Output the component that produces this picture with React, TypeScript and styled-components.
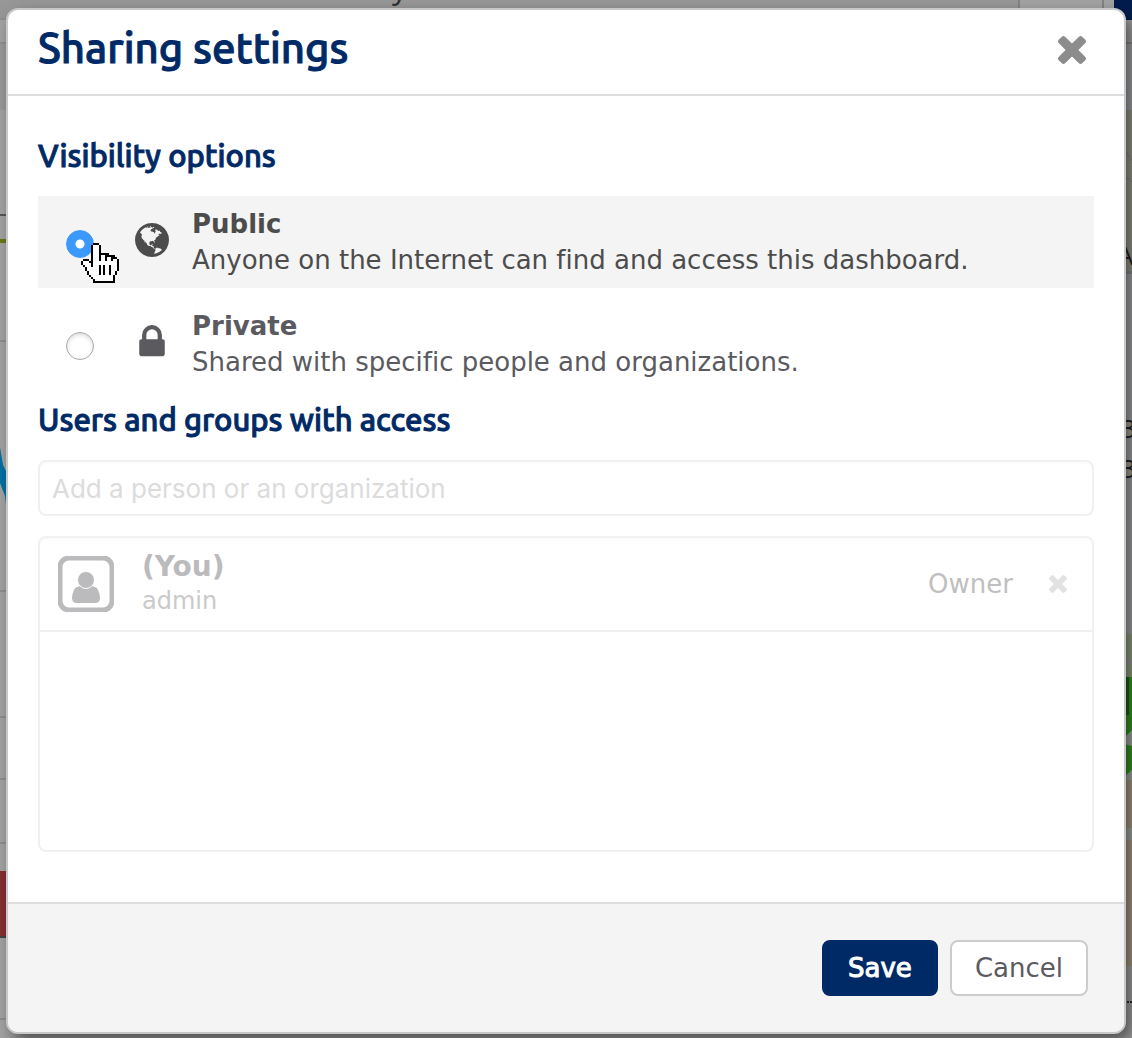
import React, { useState } from "react";
import styled, { createGlobalStyle, css } from "styled-components";

const navy = "#002a66";
const bodyFont = `Verdana, "DejaVu Sans", sans-serif`;
const headingFont = `Ubuntu, Lato, sans-serif`;

const GlobalStyle = createGlobalStyle`
  *, *::before, *::after { box-sizing: border-box; }
  body {
    margin: 0;
    background: #a3a3a3;
    font-family: ${bodyFont};
    font-size: 26px;
    line-height: 36px;
    color: #5a5a5f;
    font-variant-ligatures: none;
  }
  h1, h2, p { margin: 0; }
  button, input { font: inherit; color: inherit; }
`;

const Page = styled.div`
  position: relative;
  min-height: 100vh;
  padding: 8px 6px 4px;
  overflow: hidden;
`;

const Backdrop = styled.svg<{ $side: "left" | "right" }>`
  position: absolute;
  top: 0;
  ${p => (p.$side === "left" ? "left: 0;" : "right: 0;")}
  width: ${p => (p.$side === "left" ? "420px" : "120px")};
  height: 1038px;
`;

const TopBand = styled.div`
  position: absolute;
  top: 0;
  left: 0;
  right: 0;
  height: 20px;
  background: #979797;
`;

const Dialog = styled.section`
  position: relative;
  border: 2px solid #c8c8c8;
  border-radius: 12px;
  background: #fff;
  box-shadow: 6px 8px 16px rgba(0, 0, 0, 0.5);
  overflow: hidden;
`;

const Header = styled.header`
  display: flex;
  justify-content: space-between;
  align-items: center;
  height: 86px;
  padding: 0 38px 4px 30px;
  border-bottom: 2px solid #ddd;
`;

const Title = styled.h1`
  padding-bottom: 4px;
  font: 500 42px/52px ${headingFont};
  color: ${navy};
  -webkit-text-stroke: 1px ${navy};
`;

const IconButton = styled.button<{ $size: number; $color: string }>`
  display: flex;
  padding: 0;
  border: 0;
  background: none;
  color: ${p => p.$color};
  cursor: pointer;
  svg { width: ${p => p.$size}px; height: ${p => p.$size}px; }
`;

const Body = styled.form`
  display: block;
  padding: 40px 30px 50px;
`;

const Group = styled.fieldset`
  margin: 0;
  padding: 0;
  border: 0;
  min-width: 0;
`;

const headingStyle = css`
  display: block;
  margin: 0 0 20px;
  padding: 0;
  font: 500 31px/40px ${headingFont};
  color: ${navy};
  -webkit-text-stroke: 1px ${navy};
`;
const Legend = styled.legend`${headingStyle}`;
const SectionTitle = styled.h2`${headingStyle}`;

const Option = styled.label<{ $active: boolean }>`
  display: grid;
  grid-template-columns: 28px 80px 1fr;
  column-gap: 18px;
  align-items: start;
  margin-bottom: 10px;
  padding: 10px 28px;
  background: ${p => (p.$active ? "#f4f4f4" : "#fff")};
  color: ${p => (p.$active ? "#4c4c4c" : "#5a5a5f")};
  cursor: pointer;
`;

const RadioCell = styled.span`
  position: relative;
  display: flex;
  padding-top: 24px;
`;

const Radio = styled.input`
  appearance: none;
  width: 28px;
  height: 28px;
  margin: 0;
  border: 1px solid #a8a8a8;
  border-radius: 50%;
  background: #fff;
  box-shadow: inset 0 2px 4px rgba(0, 0, 0, 0.14);
  &:checked {
    border-color: #3b99fc;
    background: radial-gradient(circle, #fff 0 4px, #3b99fc 5px);
    box-shadow: none;
  }
`;

const Pointer = styled.svg`
  position: absolute;
  top: 37px;
  left: 15px;
  width: 38px;
  height: 40px;
  pointer-events: none;
`;

const OptionIcon = styled.span`
  display: flex;
  justify-content: center;
  align-items: center;
  height: 34px;
  margin-top: 17px;
`;

const OptionText = styled.span`
  display: flex;
  flex-direction: column;
  margin-left: -18px;
`;

const PersonInput = styled.input`
  display: block;
  width: 100%;
  height: 56px;
  margin-bottom: 20px;
  padding: 0 12px;
  border: 2px solid #f0f0f0;
  border-radius: 8px;
  background: #fff;
  box-shadow: inset 0 2px 2px rgba(0, 0, 0, 0.02);
  font: 400 26px/36px Inter, sans-serif;
  &::placeholder { color: #dcdcdc; opacity: 1; }
`;

const Members = styled.ul`
  min-height: 316px;
  margin: 0;
  padding: 0;
  list-style: none;
  border: 2px solid #f0f0f0;
  border-radius: 8px;
  box-shadow: inset 0 2px 2px rgba(0, 0, 0, 0.02);
`;

const Member = styled.li`
  display: flex;
  align-items: center;
  height: 94px;
  padding: 0 25px 0 18px;
  border-bottom: 2px solid #f0f0f0;
`;

const MemberText = styled.div`
  display: flex;
  flex: 1;
  flex-direction: column;
  margin-left: 28px;
  line-height: 34px;
`;

const MemberName = styled.strong`
  font-size: 28px;
  color: #bbbbbd;
`;
const MemberLogin = styled.span`
  font-size: 24px;
  color: #cacaca;
`;
const Role = styled.span`
  margin-right: 36px;
  color: #bfbfbf;
`;

const Footer = styled.footer`
  display: flex;
  justify-content: flex-end;
  gap: 12px;
  padding: 36px;
  border-top: 2px solid #ddd;
  background: #f4f4f4;
`;

const Button = styled.button<{ $primary?: boolean }>`
  min-width: 116px;
  height: 56px;
  padding: 0 23px;
  border: 2px solid ${p => (p.$primary ? navy : "#ccc")};
  border-radius: 8px;
  background: ${p => (p.$primary ? navy : "#fff")};
  color: ${p => (p.$primary ? "#fff" : "#5a5a5f")};
  -webkit-text-stroke: ${p => (p.$primary ? "1px #fff" : "0")};
  cursor: pointer;
`;

const TimesIcon = () => (
  <svg viewBox="110 366 1188 1188" fill="currentColor" aria-hidden="true">
    <path d="M1298 1322q0 40-28 68l-136 136q-28 28-68 28t-68-28l-294-294-294 294q-28 28-68 28t-68-28l-136-136q-28-28-28-68t28-68l294-294-294-294q-28-28-28-68t28-68l136-136q28-28 68-28t68 28l294 294 294-294q28-28 68-28t68 28l136 136q28 28 28 68t-28 68l-294 294 294 294q28 28 28 68z" />
  </svg>
);

const LockIcon = () => (
  <svg viewBox="0 128 1152 1536" width="26" height="34" fill="currentColor" aria-hidden="true">
    <path d="M320 768h512v-192q0-106-75-181t-181-75-181 75-75 181v192zm832 96v576q0 40-28 68t-68 28h-960q-40 0-68-28t-28-68v-576q0-40 28-68t68-28h32v-192q0-184 132-316t316-132 316 132 132 316v192h32q40 0 68 28t28 68z" />
  </svg>
);

const GlobeIcon = () => (
  <svg viewBox="0 128 1536 1536" width="34" height="34" fill="currentColor" aria-hidden="true">
    <path d="M768 128q209 0 385.5 103t279.5 279.5 103 385.5-103 385.5-279.5 279.5-385.5 103-385.5-103-279.5-279.5-103-385.5 103-385.5 279.5-279.5 385.5-103zm274 521q-2 1-9.5 9.5t-13.5 9.5q2 0 4.5-5t5-11 3.5-7q6-7 22-15 14-6 52-12 34-8 51 11-2-2 9.5-13t14.5-12q3-2 15-4.5t15-7.5l2-22q-12 1-17.5-7t-6.5-21q0 2-6 8 0-7-4.5-8t-11.5 1-9 1q-10-3-15-7.5t-8-16.5-4-15q-2-5-9.5-11t-9.5-10q-1-2-2.5-5.5t-3-6.5-4-5.5-5.5-2.5-7 5-7.5 10-4.5 5q-3-2-6-1.5t-4.5 1-4.5 3-5 3.5q-3 2-8.5 3t-8.5 2q15-5-1-11-10-4-16-3 9-4 7.5-12t-8.5-14h5q-1-4-8.5-8.5t-17.5-8.5-13-6q-8-5-34-9.5t-33-.5q-5 6-4.5 10.5t4 14 3.5 12.5q1 6-5.5 13t-6.5 12q0 7 14 15.5t10 21.5q-3 8-16 16t-16 12q-5 8-1.5 18.5t10.5 16.5q2 2 1.5 4t-3.5 4.5-5.5 4-6.5 3.5l-3 2q-11 5-20.5-6t-13.5-26q-7-25-16-30-23-8-29 1-5-13-41-26-25-9-58-4 6-1 0-15-7-15-19-12 3-6 4-17.5t1-13.5q3-13 12-23 1-1 7-8.5t9.5-13.5.5-6q35 4 50-11 5-5 11.5-17t10.5-17q9-6 14-5.5t14.5 5.5 14.5 5q14 1 15.5-11t-7.5-20q12 1 3-17-4-7-8-9-12-4-27 5-8 4 2 8-1-1-9.5 10.5t-16.5 17.5-16-5q-1-1-5.5-13.5t-9.5-13.5q-8 0-16 15 3-8-11-15t-24-8q19-12-8-27-7-4-20.5-5t-19.5 4q-5 7-5.5 11.5t5 8 10.5 5.5 11.5 4 8.5 3q14 10 8 14-2 1-8.5 3.5t-11.5 4.5-6 4q-3 4 0 14t-2 14q-5-5-9-17.5t-7-16.5q7 9-25 6l-10-1q-4 0-16 2t-20.5 1-13.5-8q-4-8 0-20 1-4 4-2-4-3-11-9.5t-10-8.5q-46 15-94 41 6 1 12-1 5-2 13-6.5t10-5.5q34-14 42-7l5-5q14 16 20 25-7-4-30-1-20 6-22 12 7 12 5 18-4-3-11.5-10t-14.5-11-15-5q-16 0-22 1-146 80-235 222 7 7 12 8 4 1 5 9t2.5 11 11.5-3q9 8 3 19 1-1 44 27 19 17 21 21 3 11-10 18-1-2-9-9t-9-4q-3 5 .5 18.5t10.5 12.5q-7 0-9.5 16t-2.5 35.5-1 23.5l2 1q-3 12 5.5 34.5t21.5 19.5q-13 3 20 43 6 8 8 9 3 2 12 7.5t15 10 10 10.5q4 5 10 22.5t14 23.5q-2 6 9.5 20t10.5 23q-1 0-2.5 1t-2.5 1q3 7 15.5 14t15.5 13q1 3 2 10t3 11 8 2q2-20-24-62-15-25-17-29-3-5-5.5-15.5t-4.5-14.5q2 0 6 1.5t8.5 3.5 7.5 4 2 3q-3 7 2 17.5t12 18.5 17 19 12 13q6 6 14 19.5t0 13.5q9 0 20 10t17 20q5 8 8 26t5 24q2 7 8.5 13.5t12.5 9.5l16 8 13 7q5 2 18.5 10.5t21.5 11.5q10 4 16 4t14.5-2.5 13.5-3.5q15-2 29 15t21 21q36 19 55 11-2 1 .5 7.5t8 15.5 9 14.5 5.5 8.5q5 6 18 15t18 15q6-4 7-9-3 8 7 20t18 10q14-3 14-32-31 15-49-18 0-1-2.5-5.5t-4-8.5-2.5-8.5 0-7.5 5-3q9 0 10-3.5t-2-12.5-4-13q-1-8-11-20t-12-15q-5 9-16 8t-16-9q0 1-1.5 5.5t-1.5 6.5q-13 0-15-1 1-3 2.5-17.5t3.5-22.5q1-4 5.5-12t7.5-14.5 4-12.5-4.5-9.5-17.5-2.5q-19 1-26 20-1 3-3 10.5t-5 11.5-9 7q-7 3-24 2t-24-5q-13-8-22.5-29t-9.5-37q0-10 2.5-26.5t3-25-5.5-24.5q3-2 9-9.5t10-10.5q2-1 4.5-1.5t4.5 0 4-1.5 3-6q-1-1-4-3-3-3-4-3 7 3 28.5-1.5t27.5 1.5q15 11 22-2 0-1-2.5-9.5t-.5-13.5q5 27 29 9 3 3 15.5 5t17.5 5q3 2 7 5.5t5.5 4.5 5-.5 8.5-6.5q10 14 12 24 11 40 19 44 7 3 11 2t4.5-9.5 0-14-1.5-12.5l-1-8v-18l-1-8q-15-3-18.5-12t1.5-18.5 15-18.5q1-1 8-3.5t15.5-6.5 12.5-8q21-19 15-35 7 0 11-9-1 0-5-3t-7.5-5-4.5-2q9-5 2-16 5-3 7.5-11t7.5-10q9 12 21 2 7-8 1-16 5-7 20.5-10.5t18.5-9.5q7 2 8-2t1-12 3-12q4-5 15-9t13-5l17-11q3-4 0-4 18 2 31-11 10-11-6-20 3-6-3-9.5t-15-5.5q3-1 11.5-.5t10.5-1.5q15-10-7-16-17-5-43 12zm-163 877q206-36 351-189-3-3-12.5-4.5t-12.5-3.5q-18-7-24-8 1-7-2.5-13t-8-9-12.5-8-11-7q-2-2-7-6t-7-5.5-7.5-4.5-8.5-2-10 1l-3 1q-3 1-5.5 2.5t-5.5 3-4 3 0 2.5q-21-17-36-22-5-1-11-5.5t-10.5-7-10-1.5-11.5 7q-5 5-6 15t-2 13q-7-5 0-17.5t2-18.5q-3-6-10.5-4.5t-12 4.5-11.5 8.5-9 6.5-8.5 5.5-8.5 7.5q-3 4-6 12t-5 11q-2-4-11.5-6.5t-9.5-5.5q2 10 4 35t5 38q7 31-12 48-27 25-29 40-4 22 12 26 0 7-8 20.5t-7 21.5q0 6 2 16z" />
  </svg>
);

const AvatarIcon = () => (
  <svg viewBox="0 0 56 56" width="56" height="56" aria-hidden="true">
    <rect x="2" y="2" width="52" height="52" rx="9" fill="none" stroke="#bbbbbd" strokeWidth="5" />
    <path
      fill="#bbbbbd"
      d="M20 31q2-2 4-1q4 3 8 0q2-1 4 1q3 0 4 3q2 4 2 8q0 5-5 5H19q-5 0-5-5q0-4 2-8q1-3 4-3z"
    />
    <circle cx="28" cy="24" r="8.5" fill="#bbbbbd" stroke="#fff" strokeWidth="1" />
  </svg>
);

const handRows = [
  "......XXX..........",
  ".....XoooX.........",
  ".....XoooX.........",
  ".....XoooX.........",
  ".....XoooX.........",
  ".....XoooXXXXX.....",
  ".....XoooXooXXXXX..",
  ".....XoooXooXooXXX.",
  ".XXX.XoooXooXooXooX",
  "XoooXXooooooooooooX",
  "XooooXooooooooooooX",
  ".XoooXoooXoXooXoooX",
  "..XooooooXoXooXoooX",
  "..XooooooXoXooXoooX",
  "...XoooooXoXooXooX.",
  "...XoooooXoXooXooX.",
  "....XoooooooooooX..",
  ".....XooooooooooX..",
  "......XoooooooooX..",
  "......XXXXXXXXXXX..",
];

const HandPointer = () => (
  <Pointer viewBox="0 0 19 20" shapeRendering="crispEdges" aria-hidden="true">
    {handRows.flatMap((row, y) =>
      [...row].map((cell, x) =>
        cell === "." ? null : (
          <rect key={`${x}-${y}`} x={x} y={y} width="1" height="1" fill={cell === "X" ? "#000" : "#fff"} />
        ),
      ),
    )}
  </Pointer>
);

const ChartBackdrop = () => (
  <Backdrop $side="left" viewBox="0 0 420 1038" aria-hidden="true">
    <text x="392" y="-2" fontFamily="Open Sans, sans-serif" fontSize="32" fill="#333">y</text>
    <path fill="#8f8f8f" d="M0 18h8v2H0zM0 42h8v2H0zM0 340h8v2H0zM0 590h8v2H0zM0 716h8v2H0zM0 778h8v2H0zM0 842h8v2H0zM0 1018h8v2H0z" />
    <path fill="#999" d="M0 44h8v66H0z" />
    <path fill="#555" d="M0 214h8v2H0z" />
    <path fill="#667a10" d="M0 239h8v4H0z" />
    <path fill="#0071a3" d="M0 447l3 18 5 10v45l-3-24-5-13z" />
    <path fill="#842f32" d="M0 871h8v65H0z" />
    <path fill="#444" d="M0 936h8v2H0z" />
  </Backdrop>
);

const MapBackdrop = () => (
  <Backdrop $side="right" viewBox="0 0 120 1038" aria-hidden="true">
    <path fill="#a3a3a3" d="M8 0h94v20H8z" />
    <path fill="#828282" d="M6 0h2v20H6zM90 0h2v20h-2z" />
    <path fill="#001d4d" d="M102 0h18v20h-18z" />
    <path fill="#a0a2a4" d="M112 44h8v66h-8zM112 274h8v360h-8z" />
    <path fill="#8a8a8a" d="M112 42h8v2h-8zM112 271h8v3h-8z" />
    <path fill="#95978a" d="M112 110h8v161h-8z" />
    <path stroke="#8b8175" fill="none" d="M112 149l8 12M112 180l4-2 4 4" />
    <path fill="#91a080" d="M112 634h8v43h-8z" />
    <path fill="#999" d="M112 660h8v4h-8z" />
    <path fill="#369823" d="M112 677h8v93l-8 7z" />
    <path fill="#1b6610" d="M112 677h5v38h-5z" />
    <path fill="#a4aaa4" d="M112 738l8-8v16l-8-2zM112 777l8-7v10h-8zM112 828h8v12h-8z" />
    <path fill="#a79b85" d="M112 780h8v48h-8zM112 840h8v126h-8z" />
    <g fontFamily="Open Sans, sans-serif" fontSize="26" fill="#222">
      <text x="105" y="265">A</text>
      <text x="109" y="438">3</text>
      <text x="109" y="478">3</text>
    </g>
    <path fill="#333" d="M112 992h2v2h-2zM115 1001h2v2h-2zM118 1001h2v2h-2z" />
  </Backdrop>
);

const options = [
  { value: "public", title: "Public", text: "Anyone on the Internet can find and access this dashboard.", icon: <GlobeIcon /> },
  { value: "private", title: "Private", text: "Shared with specific people and organizations.", icon: <LockIcon /> },
];

export default function App() {
  const [visibility, setVisibility] = useState("public");

  return (
    <>
      <GlobalStyle />
      <Page>
        <TopBand />
        <ChartBackdrop />
        <MapBackdrop />
        <Dialog role="dialog" aria-labelledby="dialog-title">
          <Header>
            <Title id="dialog-title">Sharing settings</Title>
            <IconButton type="button" aria-label="Close" $size={28} $color="#8c8c8c">
              <TimesIcon />
            </IconButton>
          </Header>
          <Body id="sharing">
            <Group>
              <Legend>Visibility options</Legend>
              {options.map(option => (
                <Option key={option.value} $active={visibility === option.value}>
                  <RadioCell>
                    <Radio
                      type="radio"
                      name="visibility"
                      value={option.value}
                      checked={visibility === option.value}
                      onChange={() => setVisibility(option.value)}
                    />
                    {option.value === "public" && <HandPointer />}
                  </RadioCell>
                  <OptionIcon>{option.icon}</OptionIcon>
                  <OptionText>
                    <strong>{option.title}</strong>
                    <span>{option.text}</span>
                  </OptionText>
                </Option>
              ))}
            </Group>
            <SectionTitle id="access-title">Users and groups with access</SectionTitle>
            <PersonInput
              type="text"
              aria-labelledby="access-title"
              placeholder="Add a person or an organization"
              disabled={visibility === "public"}
            />
            <Members>
              <Member>
                <AvatarIcon />
                <MemberText>
                  <MemberName>(You)</MemberName>
                  <MemberLogin>admin</MemberLogin>
                </MemberText>
                <Role>Owner</Role>
                <IconButton type="button" aria-label="Remove (You)" disabled $size={18} $color="#e2e2e2">
                  <TimesIcon />
                </IconButton>
              </Member>
            </Members>
          </Body>
          <Footer>
            <Button type="submit" form="sharing" $primary>Save</Button>
            <Button type="button">Cancel</Button>
          </Footer>
        </Dialog>
      </Page>
    </>
  );
}
